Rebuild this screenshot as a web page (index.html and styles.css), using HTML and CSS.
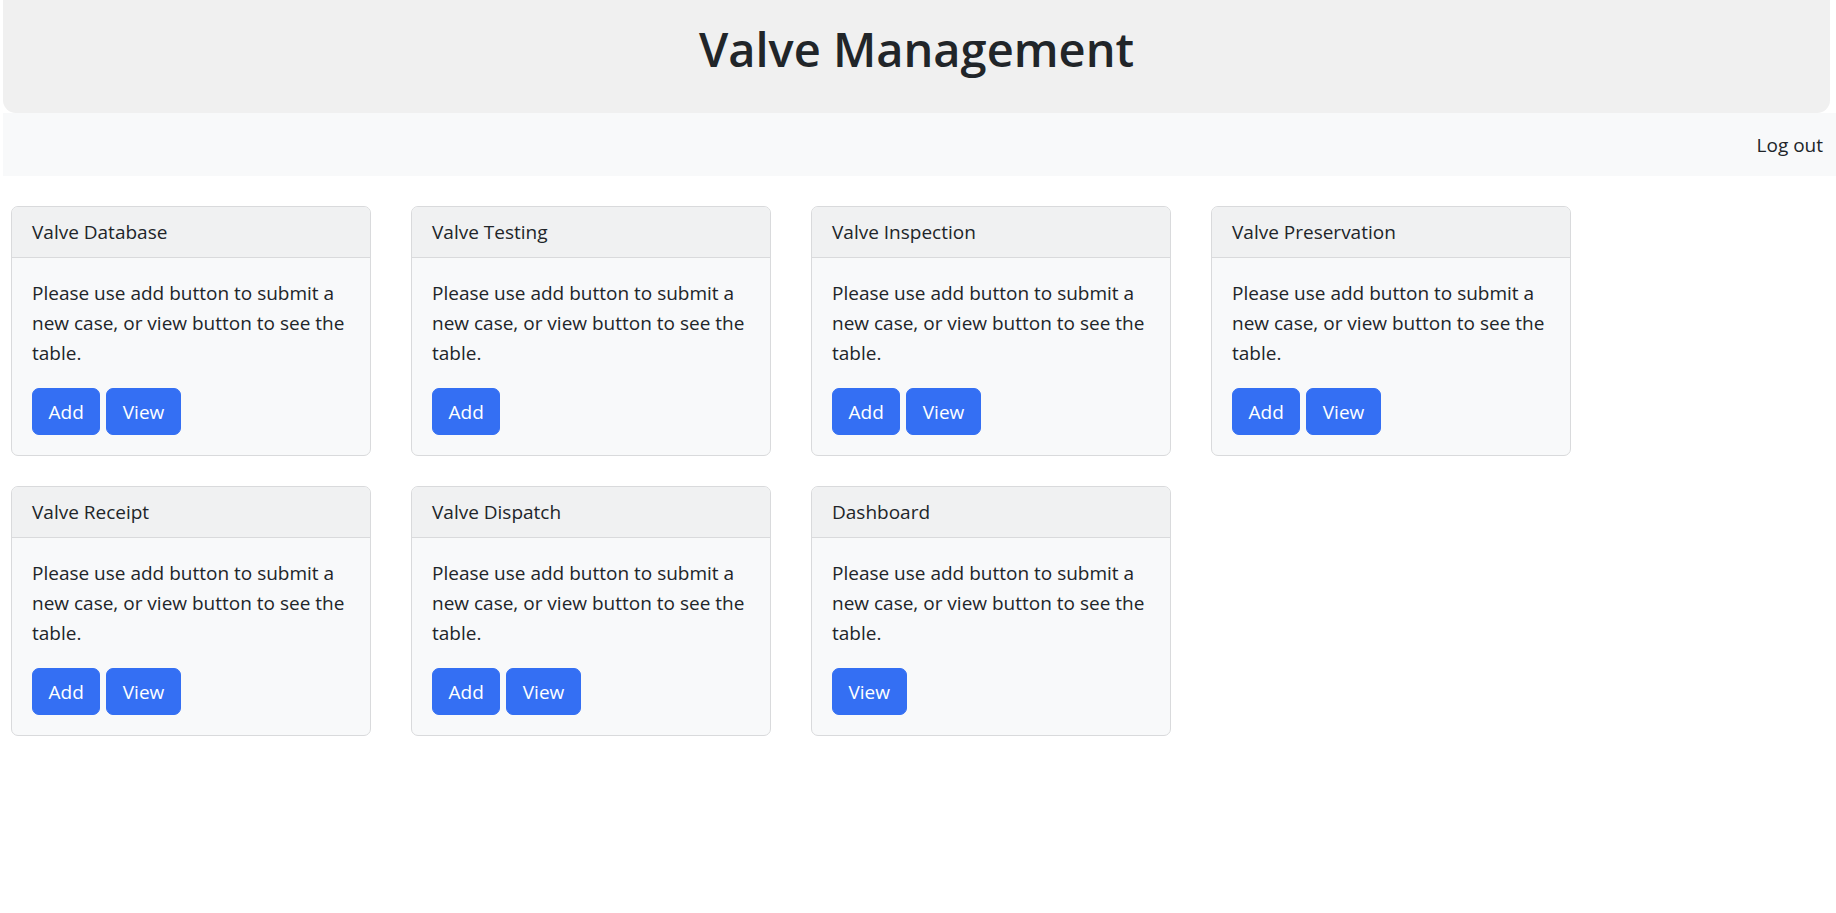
FILE: index.html
```html
<!DOCTYPE html>
<html lang="en">
<head>
<meta charset="utf-8">
<title>Valve Management</title>
<link rel="stylesheet" href="styles.css">
</head>
<body>
<header class="site-header">
  <h1 class="site-title">Valve Management</h1>
</header>
<nav class="top-nav">
  <a class="nav-link" href="#">Log out</a>
</nav>
<main class="card-grid">
  <section class="card">
    <div class="card-header">Valve Database</div>
    <div class="card-body">
      <p class="card-text">Please use add button to submit a new case, or view button to see the table.</p>
      <div class="btn-row"><a class="btn" href="#">Add</a><a class="btn" href="#">View</a></div>
    </div>
  </section>
  <section class="card">
    <div class="card-header">Valve Testing</div>
    <div class="card-body">
      <p class="card-text">Please use add button to submit a new case, or view button to see the table.</p>
      <div class="btn-row"><a class="btn" href="#">Add</a></div>
    </div>
  </section>
  <section class="card">
    <div class="card-header">Valve Inspection</div>
    <div class="card-body">
      <p class="card-text">Please use add button to submit a new case, or view button to see the table.</p>
      <div class="btn-row"><a class="btn" href="#">Add</a><a class="btn" href="#">View</a></div>
    </div>
  </section>
  <section class="card">
    <div class="card-header">Valve Preservation</div>
    <div class="card-body">
      <p class="card-text">Please use add button to submit a new case, or view button to see the table.</p>
      <div class="btn-row"><a class="btn" href="#">Add</a><a class="btn" href="#">View</a></div>
    </div>
  </section>
  <section class="card">
    <div class="card-header">Valve Receipt</div>
    <div class="card-body">
      <p class="card-text">Please use add button to submit a new case, or view button to see the table.</p>
      <div class="btn-row"><a class="btn" href="#">Add</a><a class="btn" href="#">View</a></div>
    </div>
  </section>
  <section class="card">
    <div class="card-header">Valve Dispatch</div>
    <div class="card-body">
      <p class="card-text">Please use add button to submit a new case, or view button to see the table.</p>
      <div class="btn-row"><a class="btn" href="#">Add</a><a class="btn" href="#">View</a></div>
    </div>
  </section>
  <section class="card">
    <div class="card-header">Dashboard</div>
    <div class="card-body">
      <p class="card-text">Please use add button to submit a new case, or view button to see the table.</p>
      <div class="btn-row"><a class="btn" href="#">View</a></div>
    </div>
  </section>
</main>
</body>
</html>
```
FILE: styles.css
```css
* { box-sizing: border-box; }

body {
  margin: 0;
  font-family: "Open Sans", "Noto Sans", sans-serif;
  font-size: 19px;
  line-height: 30px;
  color: #212529;
  background: #ffffff;
}

.site-header {
  margin: 0 6px 0 3px;
  height: 113px;
  padding-top: 21px;
  background: #f0f0f0;
  border-radius: 0 0 13px 13px;
}

.site-title {
  margin: 0;
  text-align: center;
  font-size: 47px;
  line-height: 56px;
  font-weight: 600;
  color: #212529;
}

.top-nav {
  margin-left: 3px;
  height: 63px;
  display: flex;
  align-items: center;
  justify-content: flex-end;
  padding-right: 13px;
  background: #f8f9fa;
}

.nav-link {
  color: #212529;
  text-decoration: none;
}

.card-grid {
  display: flex;
  flex-wrap: wrap;
  gap: 30px 40px;
  padding: 30px 0 0 11px;
}

.card {
  width: 360px;
  border: 1px solid #d9dadc;
  border-radius: 7px;
  background: #f8f9fa;
  overflow: hidden;
}

.card-header {
  padding: 10px 20px;
  background: #f0f1f2;
  border-bottom: 1px solid #d9dadc;
}

.card-body {
  padding: 20px;
}

.card-text {
  margin: 0 0 20px;
}

.btn-row {
  display: flex;
  gap: 6px;
}

.btn {
  display: inline-block;
  padding: 7.5px 15.5px;
  border: 1px solid #346ff3;
  border-radius: 7px;
  background: #346ff3;
  color: #ffffff;
  text-decoration: none;
  line-height: 30px;
}
```
